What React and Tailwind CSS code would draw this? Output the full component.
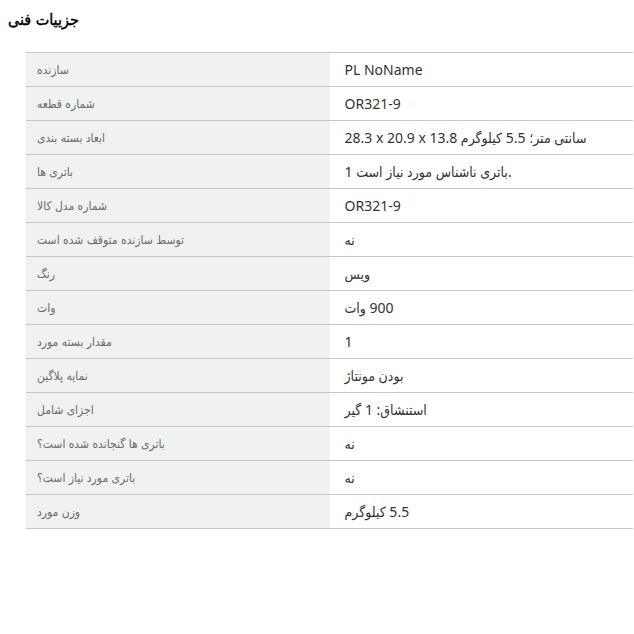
import React from "react";

const rows = [
  ["سازنده", "PL NoName"],
  ["شماره قطعه", "OR321-9"],
  ["ابعاد بسته بندی", "28.3 x 20.9 x 13.8 سانتی متر؛ 5.5 کیلوگرم"],
  ["باتری ها", "1 \u200Eباتری ناشناس مورد نیاز است."],
  ["شماره مدل کالا", "OR321-9"],
  ["توسط سازنده متوقف شده است", "نه"],
  ["رنگ", "ویس"],
  ["وات", "وات\u200E 900"],
  ["مقدار بسته مورد", "1"],
  ["نمایه پلاگین", "بودن مونتاژ"],
  ["اجزای شامل", "استنشاق: 1 گیر"],
  ["باتری ها گنجانده شده است؟", "نه"],
  ["باتری مورد نیاز است؟", "نه"],
  ["وزن مورد", "کیلوگرم\u200E 5.5"],
];

export default function App() {
  return (
    <div className="w-[634px] h-[634px] bg-white font-['Liberation_Sans','DejaVu_Sans_Condensed','DejaVu_Sans',sans-serif]">
      <div className="pl-[8px] pt-[9px] h-[52px]">
        <h2 className="text-[16px] leading-[22px] font-normal text-black [-webkit-text-stroke:0.4px_#000]" dir="ltr">
          جزییات فنی
        </h2>
      </div>
      <div className="ml-[26px] w-[607px] border-t border-[#c6c6c6]">
        {rows.map(([label, value], i) => (
          <div key={i} className="grid grid-cols-2 h-[34px] border-b border-[#c6c6c6]">
            <div className="bg-[#f0f1f1] pl-[11px] flex items-center text-[12px] text-[#6b6b6b]" dir="ltr">
              {label}
            </div>
            <div className="pl-[15px] flex items-center text-[14px] text-[#333333] font-['Noto_Sans','DejaVu_Sans_Condensed','DejaVu_Sans',sans-serif]" dir="ltr">
              {value}
            </div>
          </div>
        ))}
      </div>
    </div>
  );
}
